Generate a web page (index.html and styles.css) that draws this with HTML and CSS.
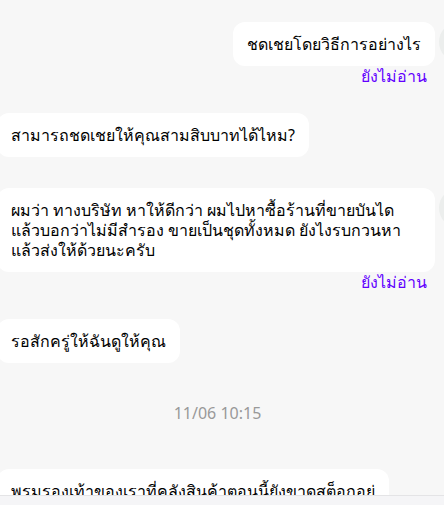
FILE: index.html
```html
<!DOCTYPE html>
<html lang="th">
<head>
  <meta charset="UTF-8" />
  <meta name="viewport" content="width=device-width, initial-scale=1.0"/>
  <title>แชท</title>
  <link rel="stylesheet" href="styles.css">
</head>
<body>

  <div class="chat">

    <div class="msg mine">
      <div class="body">
        <div class="bubble">ชดเชยโดยวิธีการอย่างไร</div>
        <div class="unread">ยังไม่อ่าน</div>
      </div>
      <div class="avatar"></div>
    </div>

    <div class="msg">
      <div class="body">
        <div class="bubble">สามารถชดเชยให้คุณสามสิบบาทได้ไหม?</div>
      </div>
    </div>

    <div class="msg">
      <div class="body">
        <div class="bubble">ผมว่า ทางบริษัท หาให้ดีกว่า ผมไปหาซื้อร้านที่ขายบันได แล้วบอกว่าไม่มีสำรอง ขายเป็นชุดทั้งหมด ยังไงรบกวนหาแล้วส่งให้ด้วยนะครับ</div>
        <div class="unread">ยังไม่อ่าน</div>
      </div>
      <div class="avatar"></div>
    </div>

    <div class="msg">
      <div class="body">
        <div class="bubble">รอสักครู่ให้ฉันดูให้คุณ</div>
      </div>
    </div>

    <div class="time">11/06 10:15</div>

    <div class="msg">
      <div class="body">
        <div class="bubble">พรมรองเท้าของเราที่คลังสินค้าตอนนี้ยังขาดสต็อกอยู่ <br>ต้องรอประมาณสามวันค่ะ</div>
      </div>
    </div>

  </div>

  <div class="inputbar"></div>

</body>
</html>
```

FILE: styles.css
```css
body {
  margin: 0;
  background: #f7f7f7;
  font-family: "Noto Sans", "DejaVu Sans", sans-serif;
  color: #000;
  overflow: hidden;
}
.chat {
  width: 480px;
  padding-top: 22px;
}
.msg {
  display: flex;
  align-items: flex-start;
  margin-bottom: 31px;
}
.body {
  width: 438px;
  margin-left: -3px;
  display: flex;
  flex-direction: column;
  align-items: flex-start;
}
.mine .body {
  align-items: flex-end;
}
.bubble {
  background: #fff;
  border-radius: 12px;
  padding: 12px 14px;
  font-size: 16px;
  line-height: 20px;
}
.unread {
  color: #6200ff;
  font-size: 16px;
  line-height: 16px;
  margin-top: 2px;
  margin-bottom: -2px;
  margin-right: 8px;
  align-self: flex-end;
}
.avatar {
  flex: none;
  width: 40px;
  height: 40px;
  margin-left: 4px;
  border-radius: 50%;
  background: #eceeed;
}
.time {
  width: 435px;
  text-align: center;
  color: #999;
  font-size: 16px;
  line-height: 20px;
  margin: 40px 0 46px;
}
.inputbar {
  position: fixed;
  left: 0;
  right: 0;
  bottom: 0;
  height: 9px;
  background: #f5f5f7;
  border-top: 1px solid #e4e4e6;
}
```
